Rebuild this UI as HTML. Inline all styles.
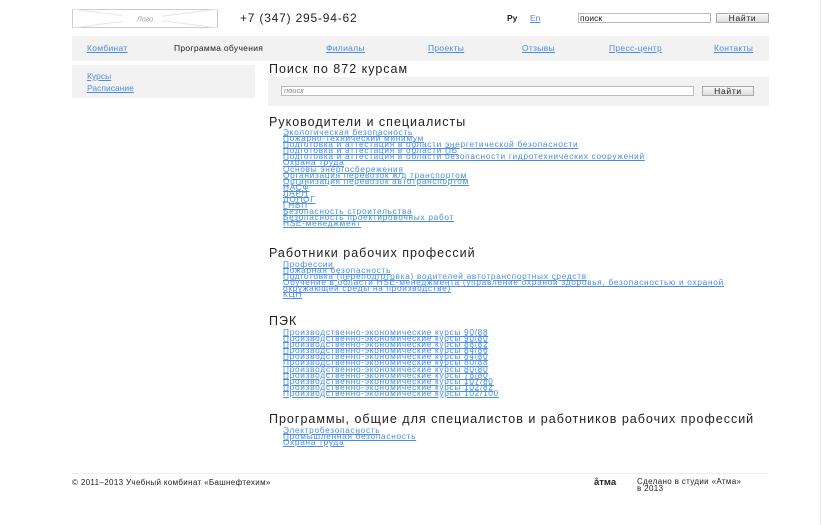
<!DOCTYPE html>
<html><head><meta charset="utf-8"><style>
*{margin:0;padding:0;box-sizing:border-box}
body{width:825px;height:525px;background:#fff;position:relative;overflow:hidden;font-family:"Liberation Sans",Arial,sans-serif;color:#222}
.a{position:absolute}
a{color:#4a8de0;text-decoration:underline}
.h{position:absolute;left:269px;font-size:12.5px;letter-spacing:1px;color:#222;white-space:nowrap}
.l{position:absolute;left:283px;font-size:8.3px;line-height:6.1px;letter-spacing:0.7px;white-space:nowrap}
.l a{display:block}
.nav a,.nav span{position:absolute;top:43px;font-size:8.5px;letter-spacing:0.3px}
.btn{position:absolute;height:10px;border:1px solid #aaa;background:linear-gradient(#f8f8f8,#ddd);font-size:8.5px;text-align:center;line-height:8px;letter-spacing:0.7px}
</style></head><body>
<svg class="a" style="left:72px;top:9px" width="146" height="19"><rect x="0.5" y="0.5" width="145" height="18" fill="#fff" stroke="#ccc"/><line x1="0" y1="0" x2="146" y2="19" stroke="#e5e5e5"/><line x1="0" y1="19" x2="146" y2="0" stroke="#e5e5e5"/><rect x="50" y="5" width="40" height="9" fill="#fff"/><text x="73" y="12.5" font-size="7" font-style="italic" fill="#999" text-anchor="middle" font-family="Liberation Sans">Лого</text></svg>
<div class="a" style="left:240px;top:11px;font-size:12px;letter-spacing:0.8px">+7 (347) 295-94-62</div>
<div class="a" style="left:507px;top:13px;font-size:8.5px;font-weight:bold">Ру</div>
<a class="a" style="left:530px;top:13px;font-size:8.5px">En</a>
<div class="a" style="left:578px;top:13px;width:133px;height:10px;border:1px solid #bbb;font-size:8.5px;line-height:8px;padding-left:1px">поиск</div>
<div class="btn" style="left:716px;top:13px;width:53px">Найти</div>
<div class="a" style="left:72px;top:36px;width:697px;height:25px;background:#f2f2f2"></div>
<div class="nav">
<a style="left:87px">Комбинат</a>
<span style="left:174px;color:#222">Программа обучения</span>
<a style="left:326px">Филиалы</a>
<a style="left:428px">Проекты</a>
<a style="left:522px">Отзывы</a>
<a style="left:609px">Пресс-центр</a>
<a style="left:714px">Контакты</a>
</div>
<div class="a" style="left:72px;top:65px;width:183px;height:33px;background:#f2f2f2"></div>
<a class="a" style="left:87px;top:71px;font-size:8.5px">Курсы</a>
<a class="a" style="left:87px;top:83px;font-size:8.5px">Расписание</a>
<div class="h" style="top:62px">Поиск по 872 курсам</div>
<div class="a" style="left:268px;top:77px;width:501px;height:29px;background:#f2f2f2"></div>
<div class="a" style="left:281px;top:86px;width:413px;height:10px;border:1px solid #bbb;background:#fff;font-size:7.5px;font-style:italic;color:#888;line-height:8px;padding-left:2px">поиск</div>
<div class="btn" style="left:702px;top:86px;width:52px">Найти</div>
<div class="h" style="top:115px">Руководители и специалисты</div>
<div class="l" style="top:129px">
<a>Экологическая безопасность</a><a>Пожарно-технический минимум</a><a>Подготовка и аттестация в области энергетической безопасности</a><a>Подготовка и аттестация в области ПБ</a><a>Подготовка и аттестация в области  безопасности гидротехнических сооружений</a><a>Охрана труда</a><a>Основы энергосбережения</a><a>Организация перевозок ж/д транспортом</a><a>Организация перевозок автотранспортом</a><a>НАСФ</a><a>ЛАРН</a><a>ДОПОГ</a><a>ГНВП</a><a>Безопасность строительства</a><a>Безопасность проектировочных работ</a><a>HSE-менеджмент</a>
</div>
<div class="h" style="top:246px">Работники рабочих профессий</div>
<div class="l" style="top:261px">
<a>Профессии</a><a>Пожарная безопасность</a><a>Подготовка (переподготовка) водителей автотранспортных средств</a><a>Обучение в области HSE-менеджмента (управление охраной здоровья, безопасностью и охраной</a><a>окружающей среды на производстве)</a><a>КЦН</a>
</div>
<div class="h" style="top:314px">ПЭК</div>
<div class="l" style="top:329px">
<a>Производственно-экономические курсы 90/88</a><a>Производственно-экономические курсы 90/80</a><a>Производственно-экономические курсы 88/82</a><a>Производственно-экономические курсы 84/86</a><a>Производственно-экономические курсы 84/80</a><a>Производственно-экономические курсы 80/88</a><a>Производственно-экономические курсы 80/80</a><a>Производственно-экономические курсы 76/80</a><a>Производственно-экономические курсы 107/80</a><a>Производственно-экономические курсы 102/82</a><a>Производственно-экономические курсы 102/100</a>
</div>
<div class="h" style="top:412px">Программы, общие для специалистов и работников рабочих профессий</div>
<div class="l" style="top:427px">
<a>Электробезопасность</a><a>Промышленная безопасность</a><a>Охрана труда</a>
</div>
<div class="a" style="left:72px;top:473px;width:697px;height:1px;background:#eee"></div>
<div class="a" style="left:72px;top:478px;font-size:8px;letter-spacing:0.35px">© 2011–2013 Учебный комбинат «Башнефтехим»</div>
<div class="a" style="left:594px;top:477px;font-size:9.5px;font-weight:bold">åтма</div>
<div class="a" style="left:637px;top:478px;font-size:8px;line-height:7px;letter-spacing:0.35px">Сделано в студии «Атма»<br>в 2013</div>
<div class="a" style="left:820px;top:0;width:1px;height:525px;background:#eee"></div>
</body></html>
